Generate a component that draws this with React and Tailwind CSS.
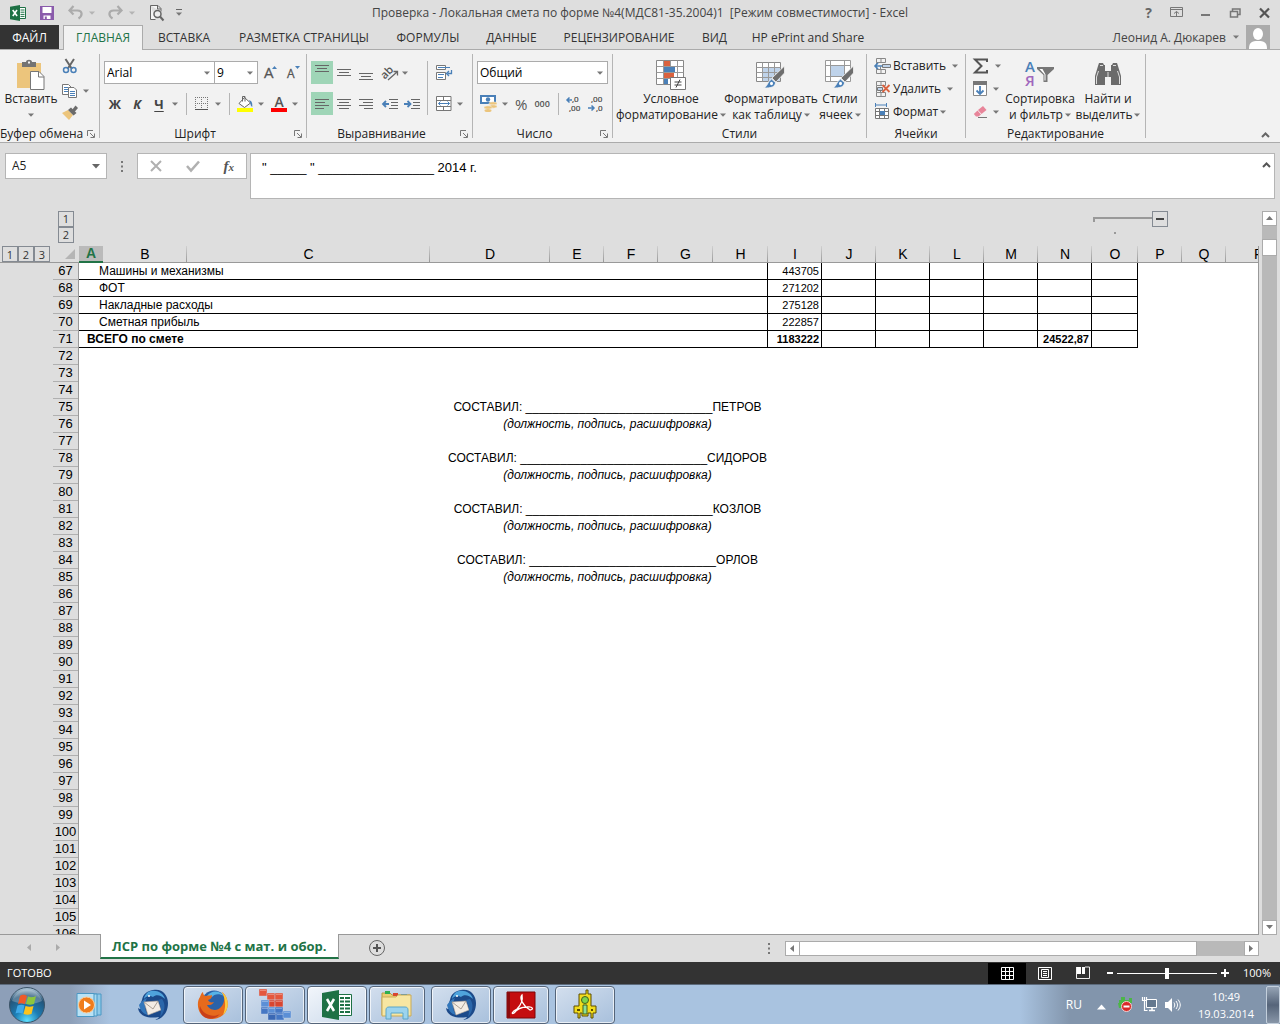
import React from "react";

const Caret = ({ className = "" }) => (
  <svg className={`shrink-0 ${className}`} width="6" height="4" viewBox="0 0 6 4">
    <path d="M0 0.5h6L3 3.8z" fill="#777" />
  </svg>
);

const Svg = ({ s = 16, w, h, children, className = "" }) => (
  <svg
    className={`shrink-0 overflow-visible ${className}`}
    width={w || s}
    height={h || s}
    viewBox={`0 0 ${w || s} ${h || s}`}
    fill="none"
  >
    {children}
  </svg>
);

const ExcelLogo = () => (
  <Svg s={16}>
    <path d="M9 2.5h6.5v11H9z" fill="#fff" stroke="#1e7145" />
    <path d="M10.5 5h4M10.5 7.2h4M10.5 9.4h4M10.5 11.4h4" stroke="#1e7145" />
    <path d="M0 1.8L10 0v16L0 14.2z" fill="#1e7145" />
    <path d="M2.7 5l4.4 6M7 5l-4.2 6" stroke="#fff" strokeWidth="1.6" />
  </Svg>
);

const SaveIcon = () => (
  <Svg s={14}>
    <path d="M0 0h14v14H0z" fill="#8a5bab" />
    <path d="M2.5 1h9v6h-9z" fill="#fff" />
    <path d="M3.5 9.5h7V13h-7z" fill="#fff" />
    <path d="M4.8 10.5h2V13h-2z" fill="#8a5bab" />
  </Svg>
);

const UndoIcon = ({ flip }) => (
  <Svg w={15} h={13} className={flip ? "-scale-x-100" : ""}>
    <path d="M5.500 0L1.500 4.500l4 4M2 4.500h7.500c5 0 5.500 5 1 8" stroke="#ababab" strokeWidth="2.200" />
  </Svg>
);

const PreviewIcon = () => (
  <Svg w={16} h={16}>
    <path d="M1.500.500h7.500l3 3v3M1.500.500v14h5M8.500.500v3.500h3.500" stroke="#666" fill="#f5f5f5" />
    <circle cx="8.500" cy="9" r="3.500" stroke="#666" strokeWidth="1.500" fill="#eee" />
    <path d="M11 11.500l3.500 4" stroke="#666" strokeWidth="2" />
  </Svg>
);

const Sep = ({ className = "" }) => <div className={`w-px shrink-0 bg-[#b5b5b5] ${className}`} />;

const Launcher = ({ name }) => (
  <button aria-label={name} className="flex w-4 items-center justify-center">
    <Svg s={8}>
      <path d="M.5 6V.5H6" stroke="#777" />
      <path d="M3 3l4 4M7.500 3.500v4h-4" stroke="#777" />
    </Svg>
  </button>
);

const Group = ({ label, launcher, className = "", children }) => (
  <section className={`flex shrink-0 flex-col border-r border-[#b5b5b5] ${className}`}>
    <div className="h-[75px] shrink-0">{children}</div>
    <div className="flex h-[9px] items-center leading-4">
      <span className="flex-1 text-center whitespace-nowrap">{label}</span>
      {launcher && <Launcher name={label} />}
    </div>
  </section>
);

const PasteIcon = () => (
  <Svg w={30} h={32}>
    <path d="M1 4h24v25H1z" fill="#ecc57c" />
    <path d="M6 3h4c0-3 6-3 6 0h4v5H6z" fill="#737373" />
    <path d="M12 2.500h2v2h-2z" fill="#f2f2f2" />
    <path d="M14.500 12.500h8.500l5 5v13H14.500z" fill="#fff" stroke="#777" />
    <path d="M22.500 12.500v5.500h5.500" stroke="#777" />
  </Svg>
);
const CutIcon = () => (
  <Svg s={16}>
    <path d="M3.500 1l6.500 10M12 1L5.500 11" stroke="#666" strokeWidth="2" />
    <circle cx="4" cy="12" r="2.500" stroke="#4a80b8" strokeWidth="1.500" />
    <circle cx="11.500" cy="12" r="2.500" stroke="#4a80b8" strokeWidth="1.500" />
  </Svg>
);
const CopyIcon = () => (
  <Svg s={16}>
    <path d="M.5 1.500h6l2.500 2.500v7.500H.5z" fill="#fff" stroke="#777" />
    <path d="M2 4.500h4M2 6.500h4M2 8.500h4" stroke="#4a80b8" />
    <path d="M6.500 4.500h5.500l2.500 2.500v7.500h-8z" fill="#fff" stroke="#777" />
    <path d="M8 8.500h5M8 10.500h5M8 12.500h5" stroke="#4a80b8" />
  </Svg>
);
const BrushIcon = () => (
  <Svg s={16}>
    <path d="M0 8l6-3 5 5-4 5z" fill="#ecc57c" />
    <path d="M6 5l3-2.500 5.500 5.500-3 2.500z" fill="#6b6b6b" />
    <path d="M10 5l3.500-4.500 2.500 2.500L12.500 7z" fill="#6b6b6b" />
  </Svg>
);

const Combo = ({ label, value, className }) => (
  <div className={`flex h-[23px] items-center border border-[#ababab] bg-white pr-1 ${className}`}>
    <input aria-label={label} defaultValue={value} className="w-full min-w-0 bg-transparent pl-[2px] text-black outline-none" />
    <Caret />
  </div>
);

const LETTER_BTN = "flex h-[22px] w-[22px] items-center justify-center text-[13px] font-bold text-[#444]";

const GrowFont = ({ small }) => (
  <Svg w={15} h={16}>
    <text x="0" y="13" fontSize={small ? "12" : "15"} fill="#555" stroke="#555" strokeWidth="0.300" fontFamily="Open Sans">
      A
    </text>
    {small ? <path d="M8 1h5l-2.500 3z" fill="#4a80b8" /> : <path d="M8 4h5l-2.500-3z" fill="#4a80b8" />}
  </Svg>
);

const BorderIcon = () => (
  <Svg s={14}>
    <path d="M.5 0v12M6.500 0v12M12.500 0v12M0 .5h13M0 6.500h13" stroke="#777" strokeDasharray="1 1" />
    <path d="M0 12.500h13" stroke="#555" />
  </Svg>
);
const FillIcon = () => (
  <Svg w={17} h={17}>
    <path d="M7.500 2.500l6 5.500-6 4.500-5.500-4z" fill="#fff" stroke="#666" />
    <path d="M5.500 6.500V1.500h2.500v5" stroke="#666" />
    <path d="M12 5c3 1 3.500 3 3.300 7-2-1-1.300-3-3.300-7z" fill="#4a80b8" />
    <path d="M0 13h16v4H0z" fill="#ff0" />
  </Svg>
);
const FontColorIcon = () => (
  <Svg w={17} h={17}>
    <text x="3.500" y="12" fontSize="14" fontWeight="600" fill="#555" fontFamily="Open Sans">
      A
    </text>
    <path d="M0 13h16v4H0z" fill="#f00" />
  </Svg>
);

const Lines = ({ rows }) => (
  <Svg w={14} h={16}>
    {rows.map(([x, y, w]) => (
      <path key={y} d={`M${x} ${y}.5h${w}`} stroke="#666" />
    ))}
  </Svg>
);
const LinesButton = ({ name, rows, on }) => (
  <button
    aria-label={name}
    className={`flex h-[23px] w-[22px] items-center justify-center ${on ? "bg-[#9fd5b7]" : ""}`}
  >
    <Lines rows={rows} />
  </button>
);
const OrientIcon = () => (
  <Svg w={18} h={16}>
    <text x="0" y="10" fontSize="11" fontWeight="600" fill="#555" fontFamily="Open Sans" transform="rotate(-45 7 9)">
      ab
    </text>
    <path d="M6 15l9-8M11.500 6.500h4v4" stroke="#666" strokeWidth="1.300" />
  </Svg>
);
const IndentIcon = ({ right }) => (
  <Svg s={16}>
    <path d="M7 3.500h9M9 6.500h7M9 9.500h7M7 12.500h9" stroke="#666" />
    {right ? (
      <path d="M0 8h6M3.500 5l3 3-3 3" stroke="#4a80b8" strokeWidth="1.800" />
    ) : (
      <path d="M1 8h6M4 5L1 8l3 3" stroke="#4a80b8" strokeWidth="1.800" />
    )}
  </Svg>
);
const WrapIcon = () => (
  <Svg w={17} h={16}>
    <path d="M.5.500h9v4h-9zM.5 7.500h9v7h-9z" fill="#fff" stroke="#777" />
    <path d="M2 2.500h12M2 9.500h6M2 12.500h5" stroke="#4a80b8" />
    <path d="M15.500 5v3.500h-4M13 6l-2.500 2.500L13 11" stroke="#4a80b8" strokeWidth="1.300" />
  </Svg>
);
const MergeIcon = () => (
  <Svg w={16} h={16}>
    <path d="M.5.500h14.500v14H.5zM.5 4.500h14.500M.5 10.500h14.500M7.500.500v4M7.500 10.500v4" fill="#fff" stroke="#777" />
    <path d="M2.500 7.500h11M4.500 5.500l-2 2 2 2M11.500 5.500l2 2-2 2" stroke="#4a80b8" />
  </Svg>
);
const MoneyIcon = () => (
  <Svg w={18} h={17}>
    <path d="M1 1h14v7H1z" fill="#fff" stroke="#4a80b8" strokeWidth="2" />
    <circle cx="8" cy="4.500" r="2.200" fill="#4a80b8" />
    <ellipse cx="13" cy="8.500" rx="4" ry="1.700" fill="#ecc57c" stroke="#f2f2f2" strokeWidth=".5" />
    <ellipse cx="13" cy="11.500" rx="4" ry="1.700" fill="#ecc57c" stroke="#f2f2f2" strokeWidth=".5" />
    <ellipse cx="8" cy="12.500" rx="4" ry="1.700" fill="#ecc57c" stroke="#f2f2f2" strokeWidth=".5" />
    <ellipse cx="8" cy="15.500" rx="3.500" ry="1.500" fill="#ecc57c" />
  </Svg>
);
const DecimalIcon = ({ less }) => (
  <Svg w={16} h={16}>
    <text x={less ? "3" : "6"} y="6" fontSize="8" fill="#444" stroke="#444" strokeWidth=".200" fontFamily="Open Sans">
      {less ? ",00" : ",0"}
    </text>
    <text x={less ? "8" : "3"} y="15" fontSize="8" fill="#444" stroke="#444" strokeWidth=".200" fontFamily="Open Sans">
      {less ? ",0" : ",00"}
    </text>
    {less ? (
      <path d="M0 12h6M3.500 9.500L6 12l-2.500 2.500" stroke="#4a80b8" strokeWidth="1.500" />
    ) : (
      <path d="M1 4h5M3.500 1.500L1 4l2.500 2.500" stroke="#4a80b8" strokeWidth="1.500" />
    )}
  </Svg>
);

const CondIcon = () => (
  <Svg w={32} h={32}>
    <path d="M1.500 1.500h27v24h-27z" fill="#fff" stroke="#888" />
    <path d="M1.500 7.500h27M1.500 13.500h27M1.500 19.500h27M8.500 1.500v24M15.500 1.500v24M22.500 1.500v24" stroke="#999" />
    <path d="M9 2h6v5H9zM9 14h10v5H9z" fill="#d9623f" />
    <path d="M9 8h11v5H9zM9 20h4v5H9z" fill="#4a80b8" />
    <path d="M15.500 18.500h15v12h-15z" fill="#fff" stroke="#777" />
    <path d="M19.500 23h7M19.500 26h7M25 20.500l-4 8" stroke="#444" />
  </Svg>
);
const PaintBrush = () => (
  <>
    <path d="M17 19L29.500 7v7L21 23z" fill="#6e6e6e" stroke="#f2f2f2" strokeWidth=".800" />
    <path d="M16.500 20l4 3.500c0 4-4 6-12 5.500 4-1 3.500-6 8-9z" fill="#4a80b8" stroke="#f2f2f2" />
    <ellipse cx="16.500" cy="24.500" rx="1.500" ry="1.800" fill="#fff" />
  </>
);
const TableFmtIcon = () => (
  <Svg w={32} h={32}>
    <path d="M1.500 3.500h24v19h-24z" fill="#fff" stroke="#888" />
    <path d="M7 9h18v13H7z" fill="#bfd3ea" />
    <path d="M1.500 8.500h24M1.500 13.500h24M1.500 18.500h24M7.500 3.500v19M13.500 3.500v19M19.500 3.500v19" stroke="#999" />
    <PaintBrush />
  </Svg>
);
const CellStyleIcon = () => (
  <Svg w={32} h={32}>
    <path d="M1.500 1.500h25v21h-25zM1.500 6.500h25M1.500 17.500h25M6.500 1.500v21M20.500 1.500v21" fill="#fff" stroke="#999" />
    <path d="M7 7h13v10H7z" fill="#bfd3ea" />
    <PaintBrush />
  </Svg>
);

const CellGrid = () => (
  <path d="M2.500.500h9v4h-9zM7 .5v4M2.500 11.500h9v4h-9zM7 11.500v4M2.500 4.500v7M6.500 8.500v3" fill="none" stroke="#888" />
);
const InsertCells = () => (
  <Svg w={17} h={16}>
    <CellGrid />
    <path d="M8.500 6.500h8v3h-8z" fill="#bfd3ea" stroke="#777" />
    <path d="M1 8h7M4 5L1 8l3 3" stroke="#4a80b8" strokeWidth="1.600" />
  </Svg>
);
const DeleteCells = () => (
  <Svg w={17} h={16}>
    <CellGrid />
    <path d="M3.500 6.500h5v3h-5z" fill="#bfd3ea" stroke="#777" />
    <path d="M8.500 4l7 7M15.500 4l-7 7" stroke="#d9623f" strokeWidth="1.800" />
  </Svg>
);
const FormatCells = () => (
  <Svg w={17} h={17}>
    <path d="M1.500 0v4M12.500 0v4M2 2h10" stroke="#4a80b8" />
    <path d="M1.500 5.500h13v10h-13zM5.500 5.500v10M10.500 5.500v10M1.500 8.500h13M1.500 12.500h13" fill="#fff" stroke="#777" />
    <path d="M6 8h5v4H6z" fill="#4a80b8" />
  </Svg>
);
const SigmaIcon = () => (
  <Svg w={16} h={16}>
    <path d="M14 4V1.500H2L8.500 8 2 14.500h12V12" stroke="#555" strokeWidth="2" />
  </Svg>
);
const FillDown = () => (
  <Svg w={15} h={16}>
    <path d="M.5.500h13v14H.5z" fill="#fff" stroke="#888" />
    <path d="M0 0h14v4H0z" fill="#777" />
    <path d="M7 5v8M3.500 9.500L7 13l3.500-3.500" stroke="#4a80b8" strokeWidth="1.800" />
  </Svg>
);
const Eraser = () => (
  <Svg w={15} h={14}>
    <path d="M5 5l5-4 3.500 4-5 4z" fill="#e8859a" />
    <path d="M4.500 5.500L8 9.500l-2.500 2H3L.8 9z" fill="#e8859a" />
    <path d="M5 12.500h9" stroke="#777" />
  </Svg>
);
const SortIcon = () => (
  <Svg w={32} h={30}>
    <text x="1" y="12" fontSize="15" fontWeight="600" fill="#4a80b8" fontFamily="Open Sans">
      А
    </text>
    <text x="1" y="26" fontSize="15" fontWeight="600" fill="#a067bd" fontFamily="Open Sans">
      Я
    </text>
    <path d="M13 7h17v2l-6.500 6v7h-4v-7L13 9z" fill="#777" />
    <path d="M15.500 9h3l3 5.500v6h-1v-6z" fill="#fff" />
  </Svg>
);
const FindIcon = () => (
  <Svg w={28} h={28}>
    <path d="M5 2h4l1 2h1v20H1V15L4 5z" fill="#6b6b6b" />
    <path d="M23 2h-4l-1 2h-1v20h10V15L24 5z" fill="#6b6b6b" />
    <path d="M11 10h6v6h-6z" fill="#6b6b6b" />
    <path d="M4.500 10L2.500 16v7M23.500 10l2 6v7M14 11v5M6 4.500h3M19 4.500h3" stroke="#ddd" strokeWidth="1" />
  </Svg>
);

const BigButton = ({ icon, lines, className }) => (
  <button className={`flex flex-col items-center text-center leading-4 whitespace-nowrap ${className}`}>
    <span className="flex h-[33px] items-center">{icon}</span>
    <span>{lines[0]}</span>
    <span className="flex h-4 items-center gap-[2px]">
      {lines[1]}
      <Caret />
    </span>
  </button>
);

const Ribbon = () => (
  <div className="flex h-[93px] shrink-0 border-b border-[#ababab] bg-[#f2f2f2] pt-1 pb-1">
    <Group label="Буфер обмена" launcher className="w-[100px]">
      <div className="flex pt-1">
        <BigButton icon={<PasteIcon />} lines={["Вставить", ""]} className="w-[62px]" />
        <div className="flex flex-col">
          <button aria-label="Вырезать" className="flex h-[22px] items-start"><CutIcon /></button>
          <button aria-label="Копировать" className="flex h-[22px] items-center gap-[5px]"><CopyIcon /><Caret /></button>
          <button aria-label="Формат по образцу" className="flex h-[22px] items-center"><BrushIcon /></button>
        </div>
      </div>
    </Group>
    <Group label="Шрифт" launcher className="w-[207px]">
      <div className="flex flex-col gap-2 pt-[7px] pl-1">
        <div className="flex items-center">
          <Combo label="Шрифт" value="Arial" className="w-[111px]" />
          <Combo label="Размер" value="9" className="-ml-px w-[44px]" />
          <button aria-label="Увеличить размер" className="ml-[6px]"><GrowFont /></button>
          <button aria-label="Уменьшить размер" className="ml-2"><GrowFont small /></button>
        </div>
        <div className="flex h-[23px] items-center">
          <button className={LETTER_BTN}>Ж</button>
          <button className={`${LETTER_BTN} italic`}>К</button>
          <button className={`${LETTER_BTN} underline underline-offset-2`}>Ч</button>
          <Caret className="ml-[2px]" />
          <Sep className="mx-2 h-[22px]" />
          <button aria-label="Границы"><BorderIcon /></button>
          <Caret className="ml-[6px]" />
          <Sep className="mr-[7px] ml-2 h-[22px]" />
          <button aria-label="Цвет заливки"><FillIcon /></button>
          <Caret className="ml-1" />
          <button aria-label="Цвет текста" className="ml-[7px]"><FontColorIcon /></button>
          <Caret className="ml-1" />
        </div>
      </div>
    </Group>
    <Group label="Выравнивание" launcher className="w-[166px]">
      <div className="flex pt-[7px] pl-1">
        <div className="flex flex-col gap-2">
          <div className="flex">
            <LinesButton name="По верхнему краю" on rows={[[0, 0, 14], [2, 3, 10], [0, 6, 14]]} />
            <LinesButton name="По середине" rows={[[0, 4, 14], [2, 7, 10], [0, 10, 14]]} />
            <LinesButton name="По нижнему краю" rows={[[0, 8, 14], [2, 11, 10], [0, 14, 14]]} />
            <button aria-label="Ориентация" className="ml-[5px] flex items-center gap-[2px]"><OrientIcon /><Caret /></button>
          </div>
          <div className="flex">
            <LinesButton name="По левому краю" on rows={[[0, 3, 14], [0, 6, 10], [0, 9, 14], [0, 12, 9]]} />
            <LinesButton name="По центру" rows={[[0, 3, 14], [2, 6, 10], [0, 9, 14], [2, 12, 10]]} />
            <LinesButton name="По правому краю" rows={[[0, 3, 14], [4, 6, 10], [0, 9, 14], [5, 12, 9]]} />
            <button aria-label="Уменьшить отступ" className="ml-[5px]"><IndentIcon /></button>
            <button aria-label="Увеличить отступ" className="ml-[6px]"><IndentIcon right /></button>
          </div>
        </div>
        <Sep className="mr-2 ml-[7px] h-[54px]" />
        <div className="flex flex-col gap-2">
          <button aria-label="Перенести текст" className="flex h-[23px] items-center"><WrapIcon /></button>
          <button aria-label="Объединить" className="flex h-[23px] items-center gap-[5px]"><MergeIcon /><Caret /></button>
        </div>
      </div>
    </Group>
    <Group label="Число" launcher className="w-[140px]">
      <div className="flex flex-col gap-2 pt-[7px] pl-1">
        <Combo label="Числовой формат" value="Общий" className="w-[131px]" />
        <div className="flex h-[23px] items-center">
          <button aria-label="Денежный формат" className="flex items-center gap-1 pl-[3px]"><MoneyIcon /><Caret /></button>
          <button className="ml-[7px] text-[15px] text-[#555]">%</button>
          <button className="ml-[7px] text-[9px] font-semibold text-[#555]">000</button>
          <Sep className="mr-[7px] ml-2 h-[22px]" />
          <button aria-label="Увеличить разрядность"><DecimalIcon /></button>
          <button aria-label="Уменьшить разрядность" className="ml-[6px]"><DecimalIcon less /></button>
        </div>
      </div>
    </Group>
    <Group label="Стили" className="w-[254px]">
      <div className="flex pt-1 pl-1">
        <BigButton icon={<CondIcon />} lines={["Условное", "форматирование"]} className="w-[108px]" />
        <BigButton icon={<TableFmtIcon />} lines={["Форматировать", "как таблицу"]} className="w-[92px]" />
        <BigButton icon={<CellStyleIcon />} lines={["Стили", "ячеек"]} className="w-[46px]" />
      </div>
    </Group>
    <Group label="Ячейки" className="w-[99px]">
      <div className="flex flex-col pl-[7px]">
        <button className="flex h-[23px] items-center"><InsertCells /><span className="mr-[6px] ml-[2px]">Вставить</span><Caret /></button>
        <button className="flex h-[23px] items-center"><DeleteCells /><span className="mr-[6px] ml-[2px]">Удалить</span><Caret /></button>
        <button className="flex h-[23px] items-center"><FormatCells /><span className="mr-[2px] ml-[2px]">Формат</span><Caret /></button>
      </div>
    </Group>
    <Group label="Редактирование" className="w-[180px]">
      <div className="flex pl-[7px]">
        <div className="flex w-[33px] flex-col">
          <button aria-label="Сумма" className="flex h-[23px] items-center gap-[6px]"><SigmaIcon /><Caret /></button>
          <button aria-label="Заполнить" className="flex h-[23px] items-center gap-[5px]"><FillDown /><Caret /></button>
          <button aria-label="Очистить" className="flex h-[23px] items-center gap-[5px]"><Eraser /><Caret /></button>
        </div>
        <BigButton icon={<SortIcon />} lines={["Сортировка", "и фильтр"]} className="w-[68px] pt-1" />
        <BigButton icon={<FindIcon />} lines={["Найти и", "выделить"]} className="w-[68px] pt-1" />
      </div>
    </Group>
    <button aria-label="Свернуть ленту" className="mr-[10px] ml-auto self-end">
      <Svg w={9} h={6}><path d="M1 5l3.500-3.500L8 5" stroke="#666" strokeWidth="2" /></Svg>
    </button>
  </div>
);

const TABS = [
  ["ВСТАВКА", "w-[82px]"],
  ["РАЗМЕТКА СТРАНИЦЫ", "w-[158px]"],
  ["ФОРМУЛЫ", "w-[90px]"],
  ["ДАННЫЕ", "w-[77px]"],
  ["РЕЦЕНЗИРОВАНИЕ", "w-[138px]"],
  ["ВИД", "w-[53px]"],
  ["HP ePrint and Share", "w-[134px]"],
];

const TopBars = () => (
  <header className="shrink-0">
    <div className="flex h-[25px] items-center px-[10px]">
      <div className="flex w-[240px] items-center">
        <ExcelLogo />
        <button aria-label="Сохранить" className="ml-[14px]"><SaveIcon /></button>
        <button aria-label="Отменить" className="ml-[14px] flex items-center gap-[6px]"><UndoIcon /><Caret className="opacity-40" /></button>
        <button aria-label="Повторить" className="ml-[13px] flex items-center gap-[6px]"><UndoIcon flip /><Caret className="opacity-40" /></button>
        <button aria-label="Просмотр" className="ml-[14px]"><PreviewIcon /></button>
        <button aria-label="Настройка панели" className="ml-[11px] flex flex-col items-center gap-[2px]">
          <span className="h-px w-[6px] bg-[#666]" />
          <Caret />
        </button>
      </div>
      <h1 className="flex-1 text-center whitespace-pre text-[#444]">
        {"Проверка - Локальная смета по форме №4(МДС81-35.2004)1  [Режим совместимости] - Excel"}
      </h1>
      <div className="flex w-[240px] items-center justify-end text-[#666]">
        <button className="text-[14px] font-bold">?</button>
        <button aria-label="Параметры ленты" className="ml-[18px]">
          <Svg w={13} h={11}>
            <path d="M.5.500h12v9H.5zM.5 2.500h12M6.500 9V4.500M4 6.500l2.500-2 2.500 2" stroke="#777" />
          </Svg>
        </button>
        <button aria-label="Свернуть" className="ml-[18px] h-[6px]"><span className="mt-1 block h-[2px] w-[9px] bg-[#777]" /></button>
        <button aria-label="Восстановить" className="ml-5">
          <Svg w={11} h={10}><path d="M2.500 3V1h7.500v5.500H8M.5 3.500h7v5.500h-7z" stroke="#777" strokeWidth="1.500" /></Svg>
        </button>
        <button aria-label="Закрыть" className="ml-[18px]">
          <Svg w={11} h={10}><path d="M1 .5l9 9M10 .5l-9 9" stroke="#555" strokeWidth="2.200" /></Svg>
        </button>
      </div>
    </div>
    <nav className="flex h-[25px] border-b border-[#ababab] leading-[25px] whitespace-nowrap">
      <button className="w-[59px] bg-[#333] text-white">ФАЙЛ</button>
      <button className="-mb-px ml-1 w-20 border border-b-0 border-[#ababab] bg-[#f2f2f2] leading-6 text-[#217346]">ГЛАВНАЯ</button>
      {TABS.map(([t, w]) => (
        <button key={t} className={`text-[#333] ${w}`}>{t}</button>
      ))}
      <button className="ml-auto flex items-center gap-[7px] text-[#444]">
        Леонид А. Дюкарев
        <Caret />
      </button>
      <span className="mr-[10px] ml-[7px]">
        <Svg w={24} h={24}>
          <path d="M0 0h24v24H0z" fill="#ababab" />
          <ellipse cx="12" cy="9" rx="5" ry="6" fill="#fff" />
          <path d="M3 24c0-7 3-8 9-8s9 1 9 8z" fill="#fff" />
        </Svg>
      </span>
    </nav>
  </header>
);

const Dots = () => (
  <Svg w={2} h={11}><path d="M0 0h2v2H0zM0 4.500h2v2H0zM0 9h2v2H0z" fill="#777" /></Svg>
);

const FormulaBar = () => (
  <div className="flex h-[68px] shrink-0 items-start pt-[10px] pr-[5px] pl-[5px]">
    <div className="flex h-[26px] w-[102px] items-center border border-[#b5b5b5] bg-white pr-[6px]">
      <input aria-label="Имя" defaultValue="A5" className="w-full min-w-0 bg-transparent pl-[6px] outline-none" />
      <Svg w={8} h={5}><path d="M0 0h8L4 4.500z" fill="#666" /></Svg>
    </div>
    <span className="mr-[14px] ml-[14px] flex h-[26px] items-center"><Dots /></span>
    <div className="flex h-[26px] w-[110px] items-center justify-around border border-[#b5b5b5] bg-white">
      <button aria-label="Отмена"><Svg w={12} h={12}><path d="M1 1l10 10M11 1L1 11" stroke="#b0b0b0" strokeWidth="2" /></Svg></button>
      <button aria-label="Ввод"><Svg w={14} h={12}><path d="M1 6l4 4.500L13 1.500" stroke="#b0b0b0" strokeWidth="2.500" /></Svg></button>
      <button className="font-['Liberation_Serif',serif] text-[15px] font-bold text-[#555] italic">f<span className="text-[11px]">x</span></button>
    </div>
    <div className="ml-[3px] flex h-[46px] flex-1 items-start border border-[#b5b5b5] bg-white pr-[3px] pl-[11px]">
      <input
        aria-label="Строка формул"
        defaultValue={'" _____ " ________________ 2014 г.'}
        className="h-[26px] flex-1 bg-transparent font-['Liberation_Sans',Arial,sans-serif] text-[13px] text-black outline-none"
      />
      <button aria-label="Свернуть строку формул" className="mt-2">
        <Svg w={9} h={6}><path d="M1 5l3.500-3.500L8 5" stroke="#555" strokeWidth="2" /></Svg>
      </button>
    </div>
  </div>
);

const OutlineButton = ({ children, className = "" }) => (
  <button className={`flex size-4 items-center justify-center border border-[#848a92] font-['Open_Sans',sans-serif] text-[11px] text-[#333] ${className}`}>
    {children}
  </button>
);

const COLS = [
  ["A", 24], ["B", 84], ["C", 243], ["D", 120], ["E", 54], ["F", 54], ["G", 55], ["H", 55],
  ["I", 54], ["J", 54], ["K", 54], ["L", 54], ["M", 54], ["N", 54], ["O", 46], ["P", 44], ["Q", 44], ["R", 66],
];

const TOTALS = {
  67: { name: "Машины и механизмы", sum: "443705" },
  68: { name: "ФОТ", sum: "271202" },
  69: { name: "Накладные расходы", sum: "275128" },
  70: { name: "Сметная прибыль", sum: "222857" },
  71: { name: "ВСЕГО по смете", sum: "1183222", hours: "24522,87", bold: true },
};
const SIGNERS = { 75: "ПЕТРОВ", 78: "СИДОРОВ", 81: "КОЗЛОВ", 84: "ОРЛОВ" };
const LINE = "_".repeat(28);
const ROWS = Array.from({ length: 40 }, (_, i) => 67 + i);

const CELL = "border-r border-b border-black p-0 pr-[2px] text-right text-[11px]";
const SIGN_CELL = "p-0 pr-[2px] text-center align-top";

const RowBody = ({ n }) => {
  const total = TOTALS[n];
  if (total) {
    const weight = total.bold ? "font-bold" : "";
    return (
      <>
        <td colSpan={8} className={`border-r border-b border-black p-0 ${weight} ${total.bold ? "pl-2" : "pl-5"}`}>{total.name}</td>
        <td className={`${CELL} ${weight}`}>{total.sum}</td>
        <td className={CELL} />
        <td className={CELL} />
        <td className={CELL} />
        <td className={CELL} />
        <td className={`${CELL} ${weight}`}>{total.hours}</td>
        <td className={CELL} />
        <td colSpan={3} />
      </>
    );
  }
  if (SIGNERS[n]) {
    return (
      <>
        <td colSpan={15} className={SIGN_CELL}>СОСТАВИЛ: {LINE}{SIGNERS[n]}</td>
        <td colSpan={3} />
      </>
    );
  }
  if (SIGNERS[n - 1]) {
    return (
      <>
        <td colSpan={15} className={`${SIGN_CELL} italic`}>(должность, подпись, расшифровка)</td>
        <td colSpan={3} />
      </>
    );
  }
  return <td colSpan={18} />;
};

const Sheet = () => (
  <div className="min-h-0 flex-1 overflow-hidden border-r border-b border-[#999]">
    <table className="w-[1292px] table-fixed border-separate border-spacing-0 bg-white font-['Liberation_Sans',Arial,sans-serif] text-[12px] leading-4 text-black">
      <colgroup>
        <col style={{ width: 79 }} />
        {COLS.map(([c, w]) => (
          <col key={c} style={{ width: w }} />
        ))}
      </colgroup>
      <thead>
        <tr className="h-[17px] bg-[#dedede] text-[14px] leading-[15px]">
          <th className="border-b border-[#999] p-0 font-normal">
            <div className="flex h-4 items-center pl-[2px]">
              <OutlineButton>1</OutlineButton>
              <OutlineButton>2</OutlineButton>
              <OutlineButton>3</OutlineButton>
              <Svg w={10} h={10} className="mr-1 ml-auto"><path d="M10 0v10H0z" fill="#b5b5b5" /></Svg>
            </div>
          </th>
          {COLS.map(([c]) => (
            <th
              key={c}
              scope="col"
              className={
                c === "A"
                  ? "border-b-2 border-[#217346] bg-[#bababa] p-0 text-[#217346]"
                  : "border-b border-[#999] bg-[linear-gradient(#d0d0d0,#999)] bg-[length:1px_100%] bg-right bg-no-repeat p-0 font-normal"
              }
            >
              {c}
            </th>
          ))}
        </tr>
      </thead>
      <tbody>
        {ROWS.map((n) => (
          <tr key={n} className="h-[17px]">
            <th scope="row" className="border-r border-[#999] bg-[#dedede] p-0 text-[13px] font-normal">
              <div className="ml-auto h-[17px] w-[25px] border-b border-[#b0b0b0] text-center">{n}</div>
            </th>
            <RowBody n={n} />
          </tr>
        ))}
      </tbody>
    </table>
  </div>
);

const Arrow = ({ dir }) => {
  const d = { up: "M0 5h7L3.500 1z", down: "M0 1h7L3.500 5z", left: "M5 0v7L1 3.500z", right: "M1 0v7l4-3.500z" }[dir];
  return <Svg w={7} h={7}><path d={d} fill="#777" /></Svg>;
};
const ScrollButton = ({ dir, name }) => (
  <button aria-label={name} className="flex size-[15px] shrink-0 items-center justify-center border border-[#ababab] bg-white">
    <Arrow dir={dir} />
  </button>
);

const Workspace = () => (
  <main className="flex min-h-0 flex-1">
    <div className="flex min-w-0 flex-1 flex-col">
      <div className="flex h-[35px] shrink-0 items-start justify-between pl-[58px]">
        <div className="flex flex-col">
          <OutlineButton>1</OutlineButton>
          <OutlineButton>2</OutlineButton>
        </div>
        <div className="mr-[91px] flex">
          <div className="flex flex-col items-center">
            <div className="mt-[6px] h-[5px] w-[59px] border-t-2 border-l-2 border-[#999]" />
            <div className="mt-[10px] mr-4 size-[2px] bg-[#999]" />
          </div>
          <OutlineButton><span className="h-[2px] w-2 bg-[#444]" /></OutlineButton>
        </div>
      </div>
      <Sheet />
    </div>
    <div className="mr-[3px] ml-[3px] flex w-[15px] flex-col bg-[#b9b9b9]">
      <ScrollButton dir="up" name="Вверх" />
      <div className="mt-[13px] h-[17px] border border-[#ababab] bg-white" />
      <div className="flex-1" />
      <ScrollButton dir="down" name="Вниз" />
    </div>
  </main>
);

const SheetBar = () => (
  <div className="flex h-[27px] shrink-0 items-start">
    <div className="flex h-[25px] w-[100px] items-center gap-[22px] pl-[26px] opacity-50">
      <button aria-label="Предыдущий лист"><Arrow dir="left" /></button>
      <button aria-label="Следующий лист"><Arrow dir="right" /></button>
    </div>
    <button className="-mt-px h-[25px] border-r border-b-2 border-l border-r-[#999] border-b-[#217346] border-l-[#999] bg-white px-[11px] text-[13px] leading-[25px] font-bold whitespace-nowrap text-[#217346]">
      ЛСР по форме №4 с мат. и обор.
    </button>
    <button aria-label="Новый лист" className="mt-1 ml-[29px]">
      <Svg w={18} h={18}>
        <circle cx="9" cy="9" r="7.500" stroke="#666" />
        <path d="M9 5v8M5 9h8" stroke="#555" strokeWidth="2" />
      </Svg>
    </button>
    <span className="mt-2 mr-[15px] ml-auto"><Dots /></span>
    <div className="mt-[6px] mr-[21px] flex w-[37%] bg-[#b9b9b9]">
      <ScrollButton dir="left" name="Влево" />
      <div className="h-[15px] w-[397px] border border-l-0 border-[#ababab] bg-white" />
      <div className="flex-1" />
      <ScrollButton dir="right" name="Вправо" />
    </div>
  </div>
);

const StatusBar = () => (
  <footer className="flex h-[22px] shrink-0 items-center bg-[#333] text-[11px] text-white">
    <span className="ml-[7px] flex-1">ГОТОВО</span>
    <button aria-label="Обычный" className="flex h-[21px] w-[38px] items-center justify-center bg-black">
      <Svg w={13} h={13}><path d="M.5.500h12v12H.5zM.5 4.500h12M.5 8.500h12M4.500.500v12M8.500.500v12" stroke="#fff" /></Svg>
    </button>
    <button aria-label="Разметка" className="flex w-[38px] items-center justify-center">
      <Svg w={14} h={13}><path d="M.5.500h13v12H.5zM3.500 2.500h7v8h-7zM5 4.500h4M5 6.500h4M5 8.500h4" stroke="#fff" /></Svg>
    </button>
    <button aria-label="Страничный" className="flex w-[38px] items-center justify-center">
      <Svg w={14} h={12}><path d="M0 0h5v7H0zM6 0h3v7H6z" fill="#fff" /><path d="M.5 0v11.500h13V0H9" stroke="#eee" /></Svg>
    </button>
    <button aria-label="Уменьшить" className="ml-[5px] h-[2px] w-[6px] bg-white" />
    <div className="mx-1 flex w-[100px] items-center">
      <span className="h-px w-[48px] bg-white" />
      <span className="h-[11px] w-1 bg-white" />
      <span className="h-px w-[48px] bg-white" />
    </div>
    <button aria-label="Увеличить"><Svg w={8} h={8}><path d="M4 0v8M0 4h8" stroke="#fff" strokeWidth="2" /></Svg></button>
    <span className="mr-[9px] pl-[14px]">100%</span>
  </footer>
);

const StartOrb = () => (
  <Svg w={38} h={38}>
    <defs>
      <radialGradient id="orb" cx=".5" cy=".95" r=".9">
        <stop offset="0" stopColor="#5ee0ff" />
        <stop offset=".4" stopColor="#1c7db5" />
        <stop offset=".8" stopColor="#245478" />
        <stop offset="1" stopColor="#9db8cc" />
      </radialGradient>
    </defs>
    <circle cx="19" cy="19" r="17.500" fill="url(#orb)" stroke="#3c5468" />
    <path d="M4 15a15.500 15.500 0 0 1 30 0c-8 4-20 4-30 0z" fill="#fff" opacity=".25" />
    <path d="M12 10c3-2 5-1 7 0l-2 8c-3-1-5-1-7 0z" fill="#ee5a29" />
    <path d="M20 10.500c3 1 5 1 8-.500l-2 8c-3 1-5 1-8 0z" fill="#8cc63e" />
    <path d="M9.500 19.500c3-1 5-1 7 0l-2 8c-3-1-5-1-7 0z" fill="#3fa9e8" />
    <path d="M17.500 20c3 1 5 1 8 0l-2 8c-3 1-5 1-8 0z" fill="#fcc31c" />
  </Svg>
);
const MediaIcon = () => (
  <Svg w={28} h={30}>
    <path d="M14 4h12v21H14z" fill="#8ec9e8" stroke="#4b98c4" />
    <path d="M9 4h13v22H9z" fill="#a4d8f0" stroke="#4b98c4" />
    <path d="M2 3.500h17v23H2z" fill="#b9e2f5" stroke="#4b98c4" />
    <circle cx="11.500" cy="15" r="8" fill="#f07c1c" stroke="#fbd0a0" />
    <path d="M9 10.500v9l7-4.500z" fill="#fff" />
  </Svg>
);
const ThunderbirdIcon = () => (
  <Svg w={34} h={34}>
    <path d="M17 2c9-2 15 5 15 13 0 9-5 16-13 17 3-1 4-3 4-3C12 31 3 28 2 20c1 1 3 1 3 1-1-3 0-7 1-9C7 6 11 3 17 2z" fill="#1c4a8a" />
    <path d="M12 4c7-3 15 0 17 7-4-4-9-5-12-2-3-2-7-1-9 2 0-3 2-5 4-7z" fill="#4fa3dc" />
    <path d="M3 17c3-4 5-6 8-7-3 5-3 11 1 17-5-1-8-5-9-10z" fill="#3377bb" />
    <path d="M8 14l14-1 3 9-13 5z" fill="#f3ece4" stroke="#b9aca0" strokeWidth=".600" />
    <path d="M8 14l9 7 5-8" stroke="#aaa095" />
    <path d="M26 11c4 5 3 13-2 18 2-6 1-12-2-17z" fill="#2a66aa" />
    <circle cx="13" cy="8" r="1" fill="#fff" />
  </Svg>
);
const FirefoxIcon = () => (
  <Svg w={34} h={34}>
    <circle cx="18" cy="15" r="12.500" fill="#2a62a9" />
    <path d="M11 8c4-6 13-6 17 0-5-3-10-2-12 1z" fill="#57b3e6" />
    <path d="M26 4c7 5 8 17 1 23-7 6-17 5-22-1C1 21 1 13 4 9c0 0 1-4 3-5 0 2 1 4 3 4 2-1 4 0 6-1 0 3-1 4-4 5 1 2 3 3 6 2-2 4-6 3-7 3 2 5 10 7 14 2 4-4 4-10 1-15z" fill="#e66a1c" />
    <path d="M26 4c7 5 8 17 1 23 3-7 3-15-1-23z" fill="#fccb3d" />
    <path d="M4 18c3 9 13 12 20 8-5 6-14 6-18 1-2-3-3-6-2-9z" fill="#c8401a" />
  </Svg>
);
const BLOCKS = [
  [1, 1, "#e4573d"], [9, 5, "#e4573d"], [17, 5, "#e4573d"], [9, 12, "#d94530"], [17, 12, "#d94530"],
  [3, 12, "#5b8fd6"], [3, 19, "#4577c4"], [10, 19, "#5b8fd6"], [17, 19, "#4577c4"], [10, 25, "#3a68b4"], [18, 25, "#4577c4"], [25, 23, "#5b8fd6"],
];
const BlocksIcon = () => (
  <Svg w={34} h={34}>
    {BLOCKS.map(([x, y, f]) => (
      <g key={`${x}-${y}`}>
        <path d={`M${x} ${y}h8v7h-8z`} fill={f} stroke="#c6d3ea" strokeWidth=".400" />
        <path d={`M${x + 1} ${y + 1}h6v1h-6z`} fill="#fff" opacity=".3" />
      </g>
    ))}
  </Svg>
);
const ExcelBig = () => (
  <Svg w={32} h={32}>
    <path d="M17 5.500h13.500v21H17z" fill="#fff" stroke="#1e7145" />
    <path d="M19 8h4v2h-4zM24 8h5v2h-5zM19 11.500h4v2h-4zM24 11.500h5v2h-5zM19 15h4v2h-4zM24 15h5v2h-5zM19 18.500h4v2h-4zM24 18.500h5v2h-5zM19 22h4v2h-4zM24 22h5v2h-5z" fill="#1e7145" />
    <path d="M1 4l17-3v30L1 28z" fill="#1e7145" />
    <path d="M6 10l7 12M13 10L6 22" stroke="#fff" strokeWidth="2.500" />
  </Svg>
);
const FolderIcon = () => (
  <Svg w={34} h={32}>
    <path d="M2 4h8l2 2h18v20H2z" fill="#eccf73" stroke="#b99a45" />
    <path d="M5 2h5v3H5z" fill="#2fae4f" /><path d="M13 4h5v3h-5z" fill="#d94530" /><path d="M21 5h6v3h-6z" fill="#3a90d0" />
    <path d="M2 8h14l2-2h13v21H2z" fill="#f7e6a2" stroke="#c9ab58" />
    <path d="M6 30V21c0-2 1-3 3-3h16c2 0 3 1 3 3v9h-5v-6H11v6z" fill="#9cd4ee" stroke="#5ba6c9" />
  </Svg>
);
const AcrobatIcon = () => (
  <Svg w={32} h={32}>
    <path d="M2 3h28v26H2z" fill="#c40d10" stroke="#7d0709" />
    <path d="M2 3h3v26H2z" fill="#8c0a0c" />
    <path d="M17 6c-3 3 1 11 8 15 4 0 3-4-3-3-5 0-10 2-13 6-3 2-2-2 3-4C16 16 18 11 17 6z" stroke="#fff" strokeWidth="1.300" />
  </Svg>
);
const RobotIcon = () => (
  <Svg w={28} h={32}>
    <path d="M15 5V1h2v4h3v12h5v7h-3v5h-2v-5h-3v3h-6v-3H9v5H7v-5H3v-7h5V5z" fill="#f2dc1d" stroke="#5c4d00" />
    <circle cx="14" cy="11" r="3.500" fill="#7cd44d" stroke="#45601a" />
    <path d="M12 16h4v9h-4z" fill="#8be09a" stroke="#45601a" />
    <path d="M6 20h3v2H6zM20 20h2v2h-2z" fill="#5c4d00" />
  </Svg>
);

const TaskButton = ({ name, active, bright, className = "w-[60px]", children }) => (
  <button
    aria-label={name}
    className={`flex h-[38px] shrink-0 items-center justify-center ${className} ${
      active
        ? `rounded-sm border border-[#55657a] shadow-[inset_0_0_0_1px_rgba(255,255,255,0.7)] ${
            bright ? "bg-linear-to-br from-[#f2f6fb] to-[#c9d8ea]" : "bg-linear-to-br from-[#d3dfee] to-[#a8c0dc]"
          }`
        : ""
    }`}
  >
    {children}
  </button>
);

const Taskbar = () => (
  <div className="flex h-10 shrink-0 items-center border-t border-[#5d6b7c] bg-[linear-gradient(90deg,#8d9fb8_0,#8d9fb8_70px,#a9c3e0_110px,#a9c3e0_calc(100%_-_260px),#8295ac_calc(100%_-_210px),#8295ac_100%)] text-white">
    <button aria-label="Пуск" className="ml-2 w-[51px]"><StartOrb /></button>
    <TaskButton name="Проигрыватель"><MediaIcon /></TaskButton>
    <TaskButton name="Почта" className="ml-1 w-[60px]"><ThunderbirdIcon /></TaskButton>
    <TaskButton name="Firefox" active><FirefoxIcon /></TaskButton>
    <TaskButton name="Блоки" active className="ml-[2px] w-[60px]"><BlocksIcon /></TaskButton>
    <TaskButton name="Excel" active bright className="ml-[2px] w-[60px]"><ExcelBig /></TaskButton>
    <TaskButton name="Проводник" active className="ml-[2px] w-[56px]"><FolderIcon /></TaskButton>
    <TaskButton name="Thunderbird" active className="ml-[6px] w-[60px]"><ThunderbirdIcon /></TaskButton>
    <TaskButton name="Acrobat" active className="ml-[2px] w-[56px]"><AcrobatIcon /></TaskButton>
    <TaskButton name="QIP" active className="ml-[6px] w-[60px]"><RobotIcon /></TaskButton>
    <span className="mr-[15px] ml-auto">RU</span>
    <button aria-label="Скрытые значки" className="mt-1"><Svg w={9} h={6}><path d="M0 5.500h9L4.500.500z" fill="#fff" /></Svg></button>
    <span className="ml-[11px]">
      <Svg s={17}>
        <path d="M4 1h4v3h4V2h3v5H2V4h2zM1 7h5v5H2z" fill="#4cb648" />
        <circle cx="9.500" cy="10.500" r="5" fill="#d92b26" stroke="#f5cfcf" />
        <path d="M6.500 9.500h6v2h-6z" fill="#fff" />
      </Svg>
    </span>
    <span className="ml-[7px]">
      <Svg w={17} h={17}>
        <path d="M5.500 3.500h10v8h-10z" fill="#64788f" stroke="#fff" />
        <path d="M8 14.500h6M11 12v2" stroke="#fff" strokeWidth="1.500" />
        <path d="M1.500 1v3.500h4V1M3.500 1v13.500h3" stroke="#fff" strokeWidth="1.200" />
      </Svg>
    </span>
    <span className="ml-[7px]">
      <Svg w={17} h={16}>
        <path d="M0 5h3l4-4v14l-4-4H0z" fill="#fff" />
        <path d="M9 5.500c1 2 1 3 0 5M11 4c2 3 2 5 0 8M13 2.500c3 4 3 7 0 11" stroke="#fff" />
      </Svg>
    </span>
    <div className="mr-3 ml-4 text-center text-[11px] leading-[17px]">
      <div>10:49</div>
      <div>19.03.2014</div>
    </div>
    <button aria-label="Показать рабочий стол" className="h-[38px] w-[14px] rounded-xs border border-[#c3cfdc] bg-linear-to-b from-[#96a4b5] via-[#56657a] to-[#8896a8]" />
  </div>
);

export default function App() {
  return (
    <div className="flex h-screen flex-col overflow-hidden bg-[#dedede] font-['Open_Sans','Noto_Sans',sans-serif] text-[12px] leading-4 text-[#222]">
      <TopBars />
      <Ribbon />
      <FormulaBar />
      <Workspace />
      <SheetBar />
      <StatusBar />
      <Taskbar />
    </div>
  );
}
